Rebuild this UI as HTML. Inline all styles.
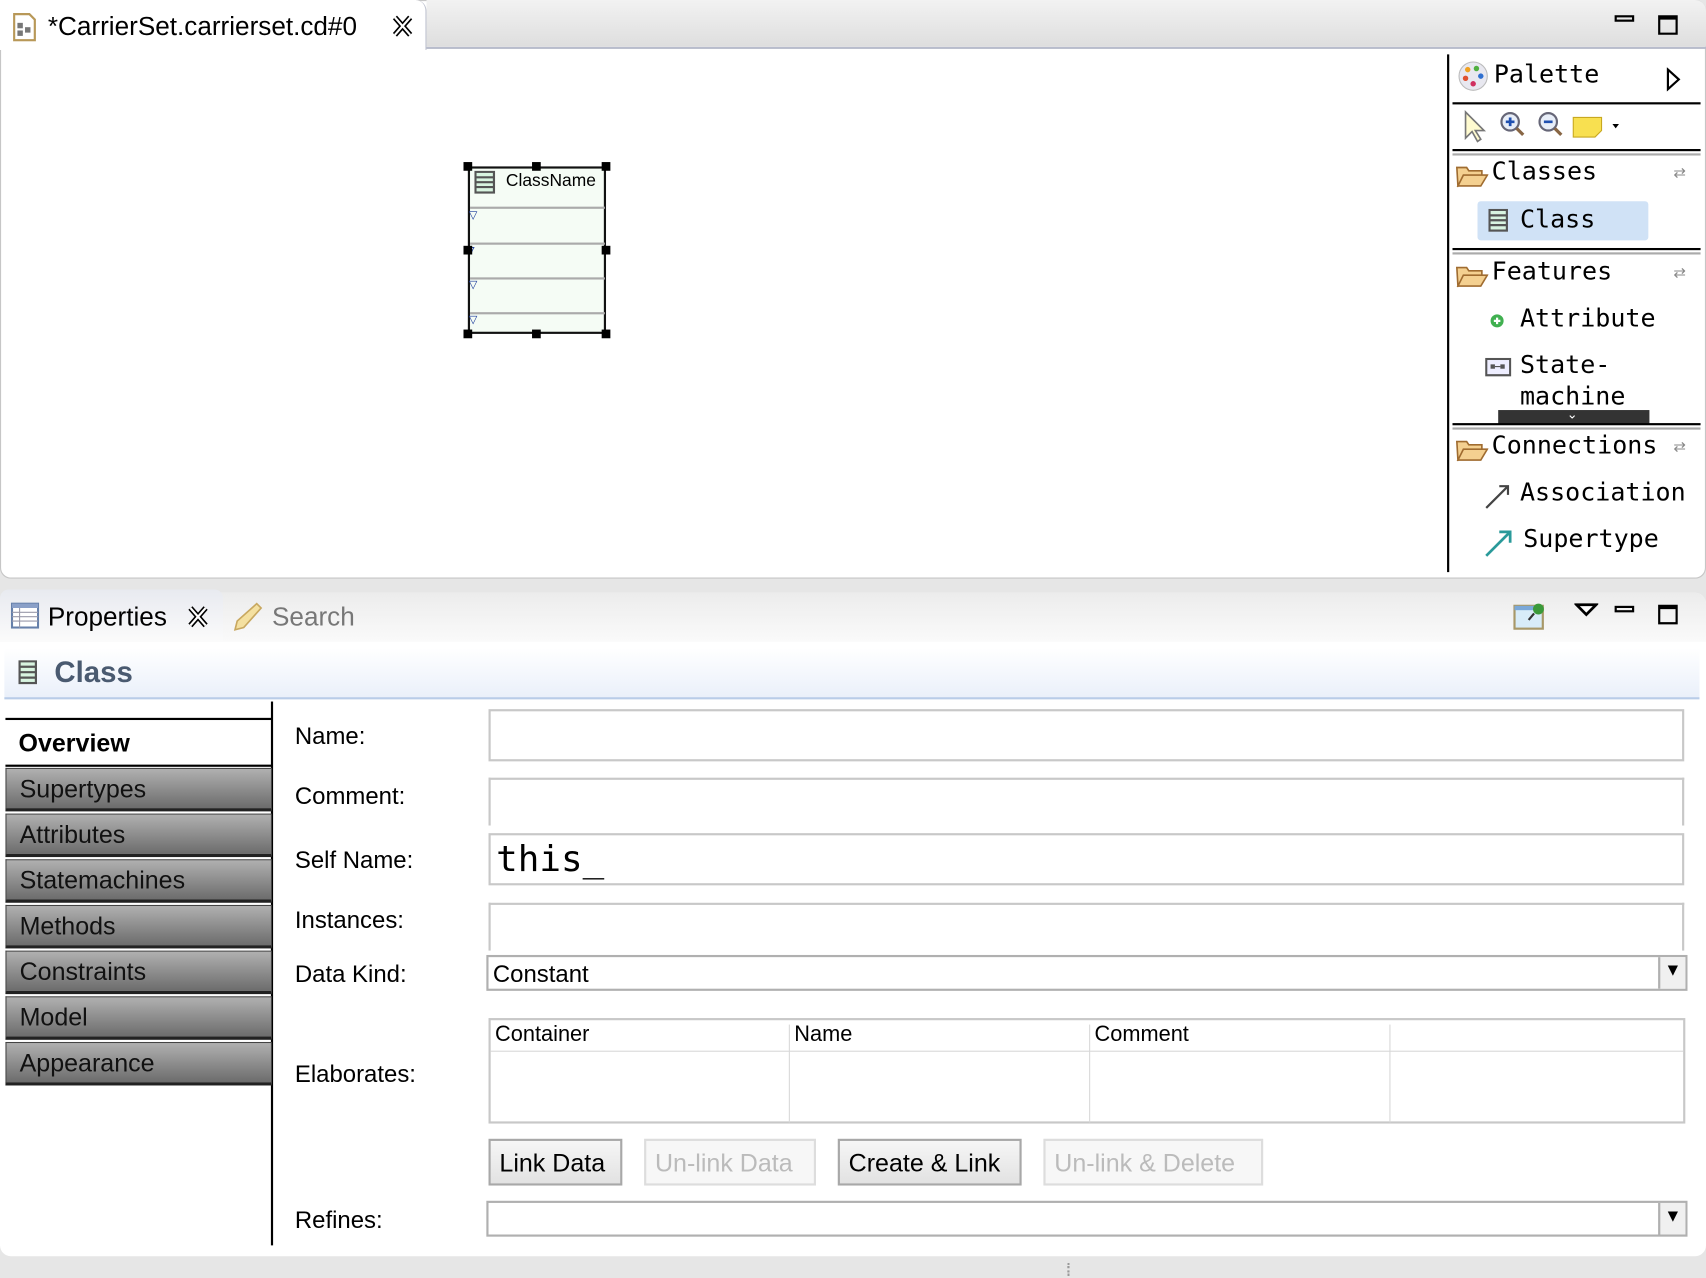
<!DOCTYPE html>
<html><head><meta charset="utf-8"><style>
*{box-sizing:border-box;margin:0;padding:0}
html,body{width:1706px;height:1278px;overflow:hidden;background:#e6e6e6}
#w{position:absolute;left:0;top:0;width:1568px;height:1175px;transform:scale(1.08801,1.08766);transform-origin:0 0;font-family:"Liberation Sans",sans-serif;color:#000}
.a{position:absolute}
.mono{font-family:"DejaVu Sans Mono","Liberation Mono",monospace}
.gt{position:absolute;left:5px;width:245px;height:40px;background:linear-gradient(#b0b0b0,#6c6c6c);border:1px solid #444;border-bottom:3px solid #222;font-size:23px;padding:5px 0 0 12px;color:#111}
.lbl{position:absolute;left:271px;font-size:22px}
.box{position:absolute;left:449px;width:1099px;border:2px solid #c8c8c8;background:#fff}
.btn{position:absolute;top:1047px;height:43px;border:2px solid #a8a8a8;background:linear-gradient(#f6f6f6,#e2e2e2);font-size:23px;padding:7px 8px 0;white-space:nowrap}
.dis{color:#bbb;border-color:#ddd;background:#f7f7f7}
.th{position:absolute;top:940px;font-size:20px}
</style></head><body><div id="w">
<div class="a" style="left:0;top:0;width:1568px;height:532px;background:#fff;border:1px solid #c6c6c6;border-radius:0 10px 10px 10px"></div>
<div class="a" style="left:392px;top:0;width:1176px;height:45px;background:linear-gradient(#f2f2f2,#dedede);border-bottom:2px solid #b8bccc;border-radius:0 10px 0 0"></div>
<div class="a" style="left:0;top:0;width:392px;height:46px;background:#fff;border-right:1px solid #c0c4d0;border-radius:0 10px 0 0"></div>
<svg class="a" style="left:12px;top:12px" width="22" height="26"><path d="M1 1h14l5 5v19H1z" fill="#fff" stroke="#b89858" stroke-width="2"/><rect x="4" y="9" width="5" height="5" fill="#777"/><rect x="11" y="13" width="5" height="5" fill="#777"/><rect x="4" y="16" width="5" height="5" fill="#777"/></svg>
<div class="a" style="left:44px;top:11px;font-size:24px">*CarrierSet.carrierset.cd#0</div>
<svg class="a" style="left:360px;top:14px" width="20" height="20"><path d="M3 2l14 16M17 2L3 18" stroke="#000" stroke-width="5"/><path d="M3 2l14 16M17 2L3 18" stroke="#fff" stroke-width="2"/></svg>
<div class="a" style="left:1484px;top:14px;width:18px;height:6px;border:2px solid #000"></div>
<div class="a" style="left:1524px;top:14px;width:18px;height:18px;border:2px solid #000;border-top-width:4px"></div>
<div class="a" style="left:430px;top:153px;width:127px;height:154px;background:#f5fcf5;border:2px solid #111"></div>
<div class="a" style="left:432px;top:190px;width:124px;height:2px;background:#aaa"></div>
<div class="a" style="left:432px;top:223px;width:124px;height:2px;background:#aaa"></div>
<div class="a" style="left:432px;top:255px;width:124px;height:2px;background:#aaa"></div>
<div class="a" style="left:432px;top:287px;width:124px;height:2px;background:#aaa"></div>
<svg class="a" style="left:436px;top:157px" width="20" height="22"><rect x="1" y="1" width="17" height="19" fill="#d8f4e0" stroke="#555" stroke-width="2"/><path d="M1 6h17M1 10.5h17M1 15h17" stroke="#555" stroke-width="2"/></svg>
<div class="a" style="left:465px;top:158px;font-size:16px">ClassName</div>
<div class="a" style="left:431px;top:193px;color:#1a3a9a;font-size:10px">&#9661;</div>
<div class="a" style="left:431px;top:226px;color:#1a3a9a;font-size:10px">7</div>
<div class="a" style="left:431px;top:257px;color:#1a3a9a;font-size:10px">&#9661;</div>
<div class="a" style="left:431px;top:289px;color:#1a3a9a;font-size:10px">&#9661;</div>
<div class="a" style="left:426px;top:149px;width:8px;height:8px;background:#000"></div>
<div class="a" style="left:489px;top:149px;width:8px;height:8px;background:#000"></div>
<div class="a" style="left:553px;top:149px;width:8px;height:8px;background:#000"></div>
<div class="a" style="left:426px;top:226px;width:8px;height:8px;background:#000"></div>
<div class="a" style="left:553px;top:226px;width:8px;height:8px;background:#000"></div>
<div class="a" style="left:426px;top:303px;width:8px;height:8px;background:#000"></div>
<div class="a" style="left:489px;top:303px;width:8px;height:8px;background:#000"></div>
<div class="a" style="left:553px;top:303px;width:8px;height:8px;background:#000"></div>
<div class="a" style="left:1330px;top:50px;width:2px;height:476px;background:#000"></div>
<svg class="a" style="left:1340px;top:56px" width="28" height="28"><circle cx="14" cy="14" r="13" fill="#e8e8f0" stroke="#bbb"/><circle cx="9" cy="8" r="2.5" fill="#f0a020"/><circle cx="17" cy="7" r="2.5" fill="#50b040"/><circle cx="21" cy="14" r="2.5" fill="#3070d0"/><circle cx="7" cy="16" r="2.5" fill="#e05030"/><circle cx="14" cy="21" r="2.5" fill="#d03060"/></svg>
<div class="a mono" style="left:1373px;top:56px;font-size:23px">Palette</div>
<svg class="a" style="left:1531px;top:62px" width="14" height="22"><path d="M2 2l10 9-10 9z" fill="#fff" stroke="#000" stroke-width="2"/></svg>
<div class="a" style="left:1335px;top:94px;width:228px;height:2px;background:#000"></div>
<svg class="a" style="left:1344px;top:100px" width="150" height="32"><path d="M3 3v24l6-6 5 9 3-2-5-8h8z" fill="#fffbd0" stroke="#777" stroke-width="1.5"/><circle cx="44" cy="12" r="8" fill="#e8eef8" stroke="#667" stroke-width="2"/><path d="M40 12h8M44 8v8" stroke="#2050b0" stroke-width="2.5"/><path d="M50 18l6 6" stroke="#864" stroke-width="3"/><circle cx="79" cy="12" r="8" fill="#e8eef8" stroke="#667" stroke-width="2"/><path d="M75 12h8" stroke="#2050b0" stroke-width="2.5"/><path d="M85 18l6 6" stroke="#864" stroke-width="3"/><path d="M102 8h26v12l-6 6h-20z" fill="#f8e050" stroke="#c8a820"/><path d="M138 14h6l-3 4z" fill="#000"/></svg>
<div class="a" style="left:1335px;top:137px;width:228px;height:2px;background:#000"></div>
<div class="a" style="left:1335px;top:141px;width:228px;height:2px;background:#aaa"></div>
<svg class="a" style="left:1338px;top:150px;" width="30" height="22"><path d="M1 4h9l2 3h12v4H7l-5 10z M2 21l5-10h22l-6 10z" fill="#f4d090" stroke="#a06c30" stroke-width="1.5"/></svg>
<div class="a mono" style="left:1371px;top:145px;font-size:23px">Classes</div>
<div class="a" style="left:1538px;top:150px;font-size:14px;color:#888">&#x21C4;</div>
<div class="a" style="left:1358px;top:185px;width:157px;height:36px;background:#d0e2f6;border-radius:3px"></div>
<svg class="a" style="left:1368px;top:192px" width="18" height="22"><rect x="1" y="1" width="16" height="19" fill="#d8f4e0" stroke="#555" stroke-width="2"/><path d="M1 6h16M1 10.5h16M1 15h16" stroke="#555" stroke-width="2"/></svg>
<div class="a mono" style="left:1397px;top:189px;font-size:23px">Class</div>
<div class="a" style="left:1335px;top:228px;width:228px;height:2px;background:#000"></div>
<div class="a" style="left:1335px;top:232px;width:228px;height:2px;background:#aaa"></div>
<svg class="a" style="left:1338px;top:242px;" width="30" height="22"><path d="M1 4h9l2 3h12v4H7l-5 10z M2 21l5-10h22l-6 10z" fill="#f4d090" stroke="#a06c30" stroke-width="1.5"/></svg>
<div class="a mono" style="left:1371px;top:237px;font-size:23px">Features</div>
<div class="a" style="left:1538px;top:242px;font-size:14px;color:#888">&#x21C4;</div>
<svg class="a" style="left:1368px;top:287px" width="16" height="16"><circle cx="8" cy="8" r="6" fill="#40b050"/><path d="M5 8h6M8 5v6" stroke="#fff" stroke-width="2"/></svg>
<div class="a mono" style="left:1397px;top:280px;font-size:23px">Attribute</div>
<svg class="a" style="left:1365px;top:329px" width="24" height="18"><rect x="1" y="1" width="22" height="15" fill="#eef" stroke="#555" stroke-width="2"/><rect x="5" y="6" width="4" height="4" fill="#555"/><rect x="14" y="6" width="4" height="4" fill="#555"/><path d="M9 8h5" stroke="#555"/></svg>
<div class="a mono" style="left:1397px;top:322px;font-size:23px;line-height:29px">State-<br>machine</div>
<div class="a" style="left:1377px;top:377px;width:139px;height:13px;background:#333"></div>
<div class="a" style="left:1440px;top:374px;color:#fff;font-size:12px">&#8964;</div>
<div class="a" style="left:1335px;top:389px;width:228px;height:2px;background:#000"></div>
<div class="a" style="left:1335px;top:393px;width:228px;height:2px;background:#aaa"></div>
<svg class="a" style="left:1338px;top:402px;" width="30" height="22"><path d="M1 4h9l2 3h12v4H7l-5 10z M2 21l5-10h22l-6 10z" fill="#f4d090" stroke="#a06c30" stroke-width="1.5"/></svg>
<div class="a mono" style="left:1371px;top:397px;font-size:23px">Connections</div>
<div class="a" style="left:1538px;top:402px;font-size:14px;color:#888">&#x21C4;</div>
<svg class="a" style="left:1364px;top:443px" width="26" height="26"><path d="M2 24L22 4M14 4h8v8" stroke="#444" stroke-width="2" fill="none"/></svg>
<div class="a mono" style="left:1397px;top:440px;font-size:23px">Association</div>
<svg class="a" style="left:1364px;top:485px" width="28" height="28"><path d="M2 26L24 4M14 4h10v10" stroke="#2a9a9a" stroke-width="2.5" fill="none"/></svg>
<div class="a mono" style="left:1400px;top:483px;font-size:23px">Supertype</div>
<div class="a" style="left:0;top:545px;width:1568px;height:610px;background:#fff;border-radius:10px"></div>
<div class="a" style="left:0;top:545px;width:1568px;height:45px;background:linear-gradient(#ececec,#fafafa);border-radius:10px 10px 0 0"></div>
<div class="a" style="left:0;top:542px;width:205px;height:48px;background:linear-gradient(#e8eaf0,#fbfbfb);border-radius:8px 8px 0 0"></div>
<svg class="a" style="left:10px;top:554px" width="26" height="24"><rect x="1" y="1" width="24" height="22" fill="#fff" stroke="#6680aa" stroke-width="2"/><rect x="1" y="1" width="24" height="4" fill="#8aa0c8"/><path d="M1 9h24M1 13h24M1 17h24M8 5v18" stroke="#99a" stroke-width="1"/></svg>
<div class="a" style="left:44px;top:554px;font-size:24px">Properties</div>
<svg class="a" style="left:172px;top:557px" width="20" height="20"><path d="M3 2l14 16M17 2L3 18" stroke="#000" stroke-width="5"/><path d="M3 2l14 16M17 2L3 18" stroke="#fff" stroke-width="2"/></svg>
<svg class="a" style="left:212px;top:553px" width="30" height="28"><path d="M24 2l4 4-16 18-8 2 2-8z" fill="#f4e0a0" stroke="#c8a860" stroke-width="1.5"/></svg>
<div class="a" style="left:250px;top:554px;font-size:24px;color:#777">Search</div>
<svg class="a" style="left:1390px;top:552px" width="32" height="28"><rect x="2" y="5" width="26" height="21" fill="#d8ecf8" stroke="#a89868" stroke-width="2"/><rect x="2" y="5" width="26" height="4" fill="#7aa8d8"/><circle cx="24" cy="8" r="5" fill="#3a9a3a"/><path d="M20 12l-5 6" stroke="#333" stroke-width="2"/></svg>
<svg class="a" style="left:1447px;top:554px" width="22" height="14"><path d="M2 2h18l-9 9z" fill="#fff" stroke="#000" stroke-width="2.5"/></svg>
<div class="a" style="left:1484px;top:557px;width:18px;height:6px;border:2px solid #000"></div>
<div class="a" style="left:1524px;top:556px;width:18px;height:18px;border:2px solid #000;border-top-width:4px"></div>
<div class="a" style="left:4px;top:596px;width:1558px;height:47px;background:linear-gradient(#fff,#eaf0fa);border-bottom:2px solid #b8cce8"></div>
<svg class="a" style="left:17px;top:607px" width="18" height="24"><rect x="1" y="1" width="15" height="20" fill="#d8f4e0" stroke="#555" stroke-width="2"/><path d="M1 6h15M1 11h15M1 16h15" stroke="#555" stroke-width="2"/></svg>
<div class="a" style="left:50px;top:603px;font-size:27px;font-weight:bold;color:#4a5a70">Class</div>
<div class="a" style="left:249px;top:645px;width:2px;height:500px;background:#000"></div>
<div class="a" style="left:5px;top:660px;width:245px;height:2px;background:#000"></div>
<div class="a" style="left:17px;top:670px;font-size:23px;font-weight:bold">Overview</div>
<div class="a" style="left:5px;top:703px;width:245px;height:2px;background:#000"></div>
<div class="gt" style="top:706px">Supertypes</div>
<div class="gt" style="top:748px">Attributes</div>
<div class="gt" style="top:790px">Statemachines</div>
<div class="gt" style="top:832px">Methods</div>
<div class="gt" style="top:874px">Constraints</div>
<div class="gt" style="top:916px">Model</div>
<div class="gt" style="top:958px">Appearance</div>
<div class="lbl" style="top:664px">Name:</div>
<div class="box" style="top:652px;height:48px"></div>
<div class="lbl" style="top:719px">Comment:</div>
<div class="box" style="top:715px;height:44px;border-bottom:none"></div>
<div class="lbl" style="top:778px">Self Name:</div>
<div class="box" style="top:766px;height:48px"></div>
<div class="a mono" style="left:456px;top:770px;font-size:33px">this_</div>
<div class="lbl" style="top:833px">Instances:</div>
<div class="box" style="top:830px;height:44px;border-bottom:none"></div>
<div class="lbl" style="top:883px">Data Kind:</div>
<div class="a" style="left:447px;top:878px;width:1104px;height:33px;border:2px solid #b0b0b0;background:#fff"></div>
<div class="a" style="left:453px;top:883px;font-size:22px">Constant</div>
<div class="a" style="left:1524px;top:880px;width:25px;height:29px;background:#f0f0f0;border-left:2px solid #b0b0b0;font-size:16px;text-align:center;padding-top:4px">&#9660;</div>
<div class="lbl" style="top:975px">Elaborates:</div>
<div class="a" style="left:449px;top:936px;width:1100px;height:97px;border:2px solid #c8c8c8;background:#fff"></div>
<div class="a" style="left:451px;top:966px;width:1096px;height:1px;background:#d8d8d8"></div>
<div class="a" style="left:725px;top:942px;width:1px;height:90px;background:#d8d8d8"></div>
<div class="a" style="left:1001px;top:942px;width:1px;height:90px;background:#d8d8d8"></div>
<div class="a" style="left:1277px;top:942px;width:1px;height:90px;background:#d8d8d8"></div>
<div class="th" style="left:455px">Container</div>
<div class="th" style="left:730px">Name</div>
<div class="th" style="left:1006px">Comment</div>
<div class="btn" style="left:449px;width:123px">Link Data</div>
<div class="btn dis" style="left:592px;width:158px">Un-link Data</div>
<div class="btn" style="left:770px;width:169px">Create &amp; Link</div>
<div class="btn dis" style="left:959px;width:202px">Un-link &amp; Delete</div>
<div class="lbl" style="top:1109px">Refines:</div>
<div class="a" style="left:447px;top:1104px;width:1104px;height:33px;border:2px solid #b0b0b0;background:#fff"></div>
<div class="a" style="left:1524px;top:1106px;width:25px;height:29px;background:#f0f0f0;border-left:2px solid #b0b0b0;font-size:16px;text-align:center;padding-top:4px">&#9660;</div>
<div class="a" style="left:981px;top:1161px;width:2px;height:12px;border-left:2px dotted #999"></div>
</div></body></html>
